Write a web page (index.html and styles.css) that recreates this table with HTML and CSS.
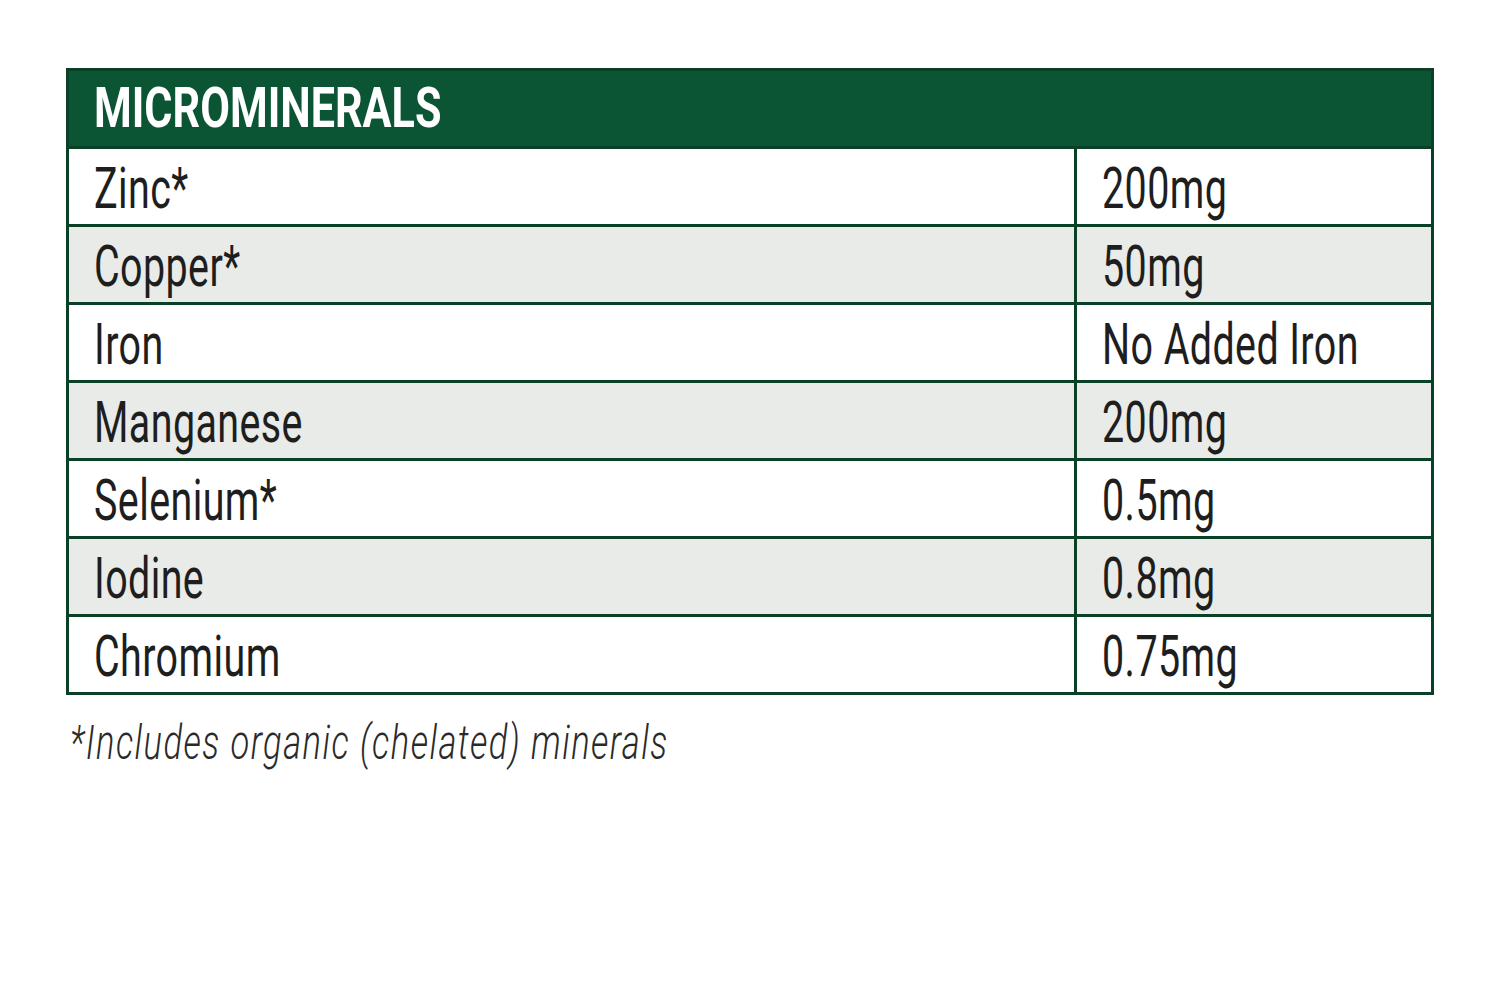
FILE: index.html
```html
<!DOCTYPE html>
<html lang="en">
<head>
<meta charset="utf-8">
<title>Microminerals</title>
<link rel="stylesheet" href="styles.css">
</head>
<body>
<div class="page">
  <div class="table">
    <div class="head"><span class="sq hd">MICROMINERALS</span></div>
    <div class="row"><div class="name"><span class="sq">Zinc*</span></div><div class="val"><span class="sq">200mg</span></div></div>
    <div class="row alt"><div class="name"><span class="sq">Copper*</span></div><div class="val"><span class="sq">50mg</span></div></div>
    <div class="row"><div class="name"><span class="sq">Iron</span></div><div class="val"><span class="sq">No Added Iron</span></div></div>
    <div class="row alt"><div class="name"><span class="sq">Manganese</span></div><div class="val"><span class="sq">200mg</span></div></div>
    <div class="row"><div class="name"><span class="sq">Selenium*</span></div><div class="val"><span class="sq">0.5mg</span></div></div>
    <div class="row alt"><div class="name"><span class="sq">Iodine</span></div><div class="val"><span class="sq">0.8mg</span></div></div>
    <div class="row"><div class="name"><span class="sq">Chromium</span></div><div class="val"><span class="sq">0.75mg</span></div></div>
  </div>
  <p class="note"><span class="sq">*Includes organic (chelated) minerals</span></p>
</div>
</body>
</html>
```
FILE: styles.css
```css
html, body {
  margin: 0;
  padding: 0;
  background: #ffffff;
}
.page {
  padding: 68px 0 0 66px;
  font-family: Roboto, "Liberation Sans", sans-serif;
}
.table {
  width: 1368px;
  box-sizing: border-box;
  border: 3px solid #0a4026;
}
.head {
  height: 75px;
  background: #0b5534;
  padding-left: 25px;
  line-height: 75px;
  font-size: 56px;
  font-weight: 700;
  color: #ffffff;
  white-space: nowrap;
  overflow: hidden;
}
.sq {
  display: inline-block;
  transform-origin: 0 50%;
  white-space: nowrap;
}
.hd {
  transform: scaleX(0.77);
}
.row {
  display: grid;
  grid-template-columns: 1005px 1fr;
  border-top: 3px solid #0a4026;
  height: 75px;
  background: #ffffff;
}
.row.alt {
  background: #e9ebe8;
}
.name, .val {
  padding-left: 25px;
  line-height: 75px;
  font-size: 58px;
  font-weight: 400;
  color: #1e1e1e;
  overflow: hidden;
}
.val {
  border-left: 3px solid #0a4026;
}
.name .sq, .val .sq {
  letter-spacing: 0.6px;
  transform: translateY(2px) scaleX(0.68);
}
.note {
  margin: 18px 0 0 4px;
  font-size: 48px;
  font-weight: 300;
  font-style: italic;
  color: #2a2a2a;
  line-height: 60px;
}
.note .sq {
  letter-spacing: 2px;
  transform: scaleX(0.72);
}
```
